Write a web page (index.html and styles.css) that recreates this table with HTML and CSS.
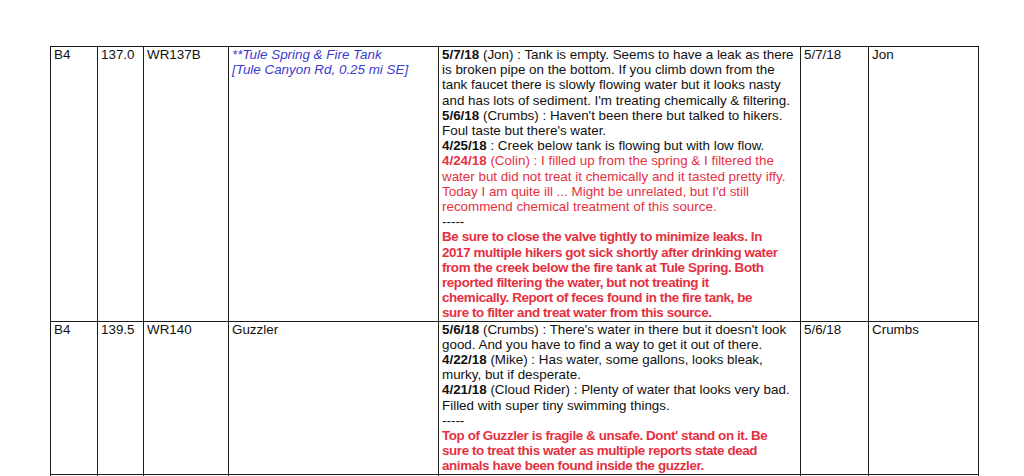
FILE: index.html
```html
<!DOCTYPE html>
<html>
<head>
<meta charset="utf-8">
<link rel="stylesheet" href="styles.css">
</head>
<body>
<table class="sheet">
  <colgroup>
    <col class="c-sec">
    <col class="c-mile">
    <col class="c-id">
    <col class="c-loc">
    <col class="c-desc">
    <col class="c-date">
    <col class="c-by">
  </colgroup>
  <tbody>
    <tr>
      <td>B4</td>
      <td>137.0</td>
      <td>WR137B</td>
      <td class="loc-blue">**Tule Spring &amp; Fire Tank<br>[Tule Canyon Rd, 0.25 mi SE]</td>
      <td>
        <b>5/7/18</b> (Jon) : Tank is empty. Seems to have a leak as there is broken pipe on the bottom. If you climb down from the tank faucet there is slowly flowing water but it looks nasty and has lots of sediment. I'm treating chemically &amp; filtering.<br>
        <b>5/6/18</b> (Crumbs) : Haven't been there but talked to hikers. Foul taste but there's water.<br>
        <b>4/25/18</b> : Creek below tank is flowing but with low flow.<br>
        <span class="red"><b>4/24/18</b> (Colin) : I filled up from the spring &amp; I filtered the water but did not treat it chemically and it tasted pretty iffy. Today I am quite ill ... Might be unrelated, but I'd still recommend chemical treatment of this source.</span><br>
        -----<br>
        <b class="red warn">Be sure to close the valve tightly to minimize leaks. In<br>2017 multiple hikers got sick shortly after drinking water<br>from the creek below the fire tank at Tule Spring. Both<br>reported filtering the water, but not treating it<br>chemically. Report of feces found in the fire tank, be<br>sure to filter and treat water from this source.</b>
      </td>
      <td>5/7/18</td>
      <td>Jon</td>
    </tr>
    <tr>
      <td>B4</td>
      <td>139.5</td>
      <td>WR140</td>
      <td>Guzzler</td>
      <td>
        <b>5/6/18</b> (Crumbs) : There's water in there but it doesn't look good. And you have to find a way to get it out of there.<br>
        <b>4/22/18</b> (Mike) : Has water, some gallons, looks bleak, murky, but if desperate.<br>
        <b>4/21/18</b> (Cloud Rider) : Plenty of water that looks very bad. Filled with super tiny swimming things.<br>
        -----<br>
        <b class="red warn">Top of Guzzler is fragile &amp; unsafe. Dont' stand on it. Be<br>sure to treat this water as multiple reports state dead<br>animals have been found inside the guzzler.</b>
      </td>
      <td>5/6/18</td>
      <td>Crumbs</td>
    </tr>
    <tr>
      <td>B4</td>
      <td>140.3</td>
      <td>WRCS140B</td>
      <td>Nance Canyon [spring area]</td>
      <td><b>4/21/18</b> (Cloud Rider) : Running water in the creek.</td>
      <td>4/21/18</td>
      <td>Cloud Rider</td>
    </tr>
  </tbody>
</table>
</body>
</html>
```

FILE: styles.css
```css
html, body {
  margin: 0;
  padding: 0;
  background: #ffffff;
  overflow: hidden;
}

body {
  font-family: "Liberation Sans", Arial, sans-serif;
  color: #111111;
}

.sheet {
  margin: 46px 0 0 50px;
  border-collapse: collapse;
  table-layout: fixed;
  width: 928px;
  font-size: 13.4px;
  line-height: 15.2px;
}

.sheet td {
  border: 1px solid #1a1a1a;
  vertical-align: top;
  padding: 0 2px 0 3px;
}

.c-sec { width: 47px; }
.c-mile { width: 46px; }
.c-id { width: 85px; }
.c-loc { width: 210px; }
.c-desc { width: 362px; }
.c-date { width: 68px; }
.c-by { width: 110px; }

.loc-blue {
  color: #3b3bd0;
  font-style: italic;
}

.red {
  color: #e5303f;
}

.warn {
  letter-spacing: -0.4px;
  white-space: nowrap;
}
```
